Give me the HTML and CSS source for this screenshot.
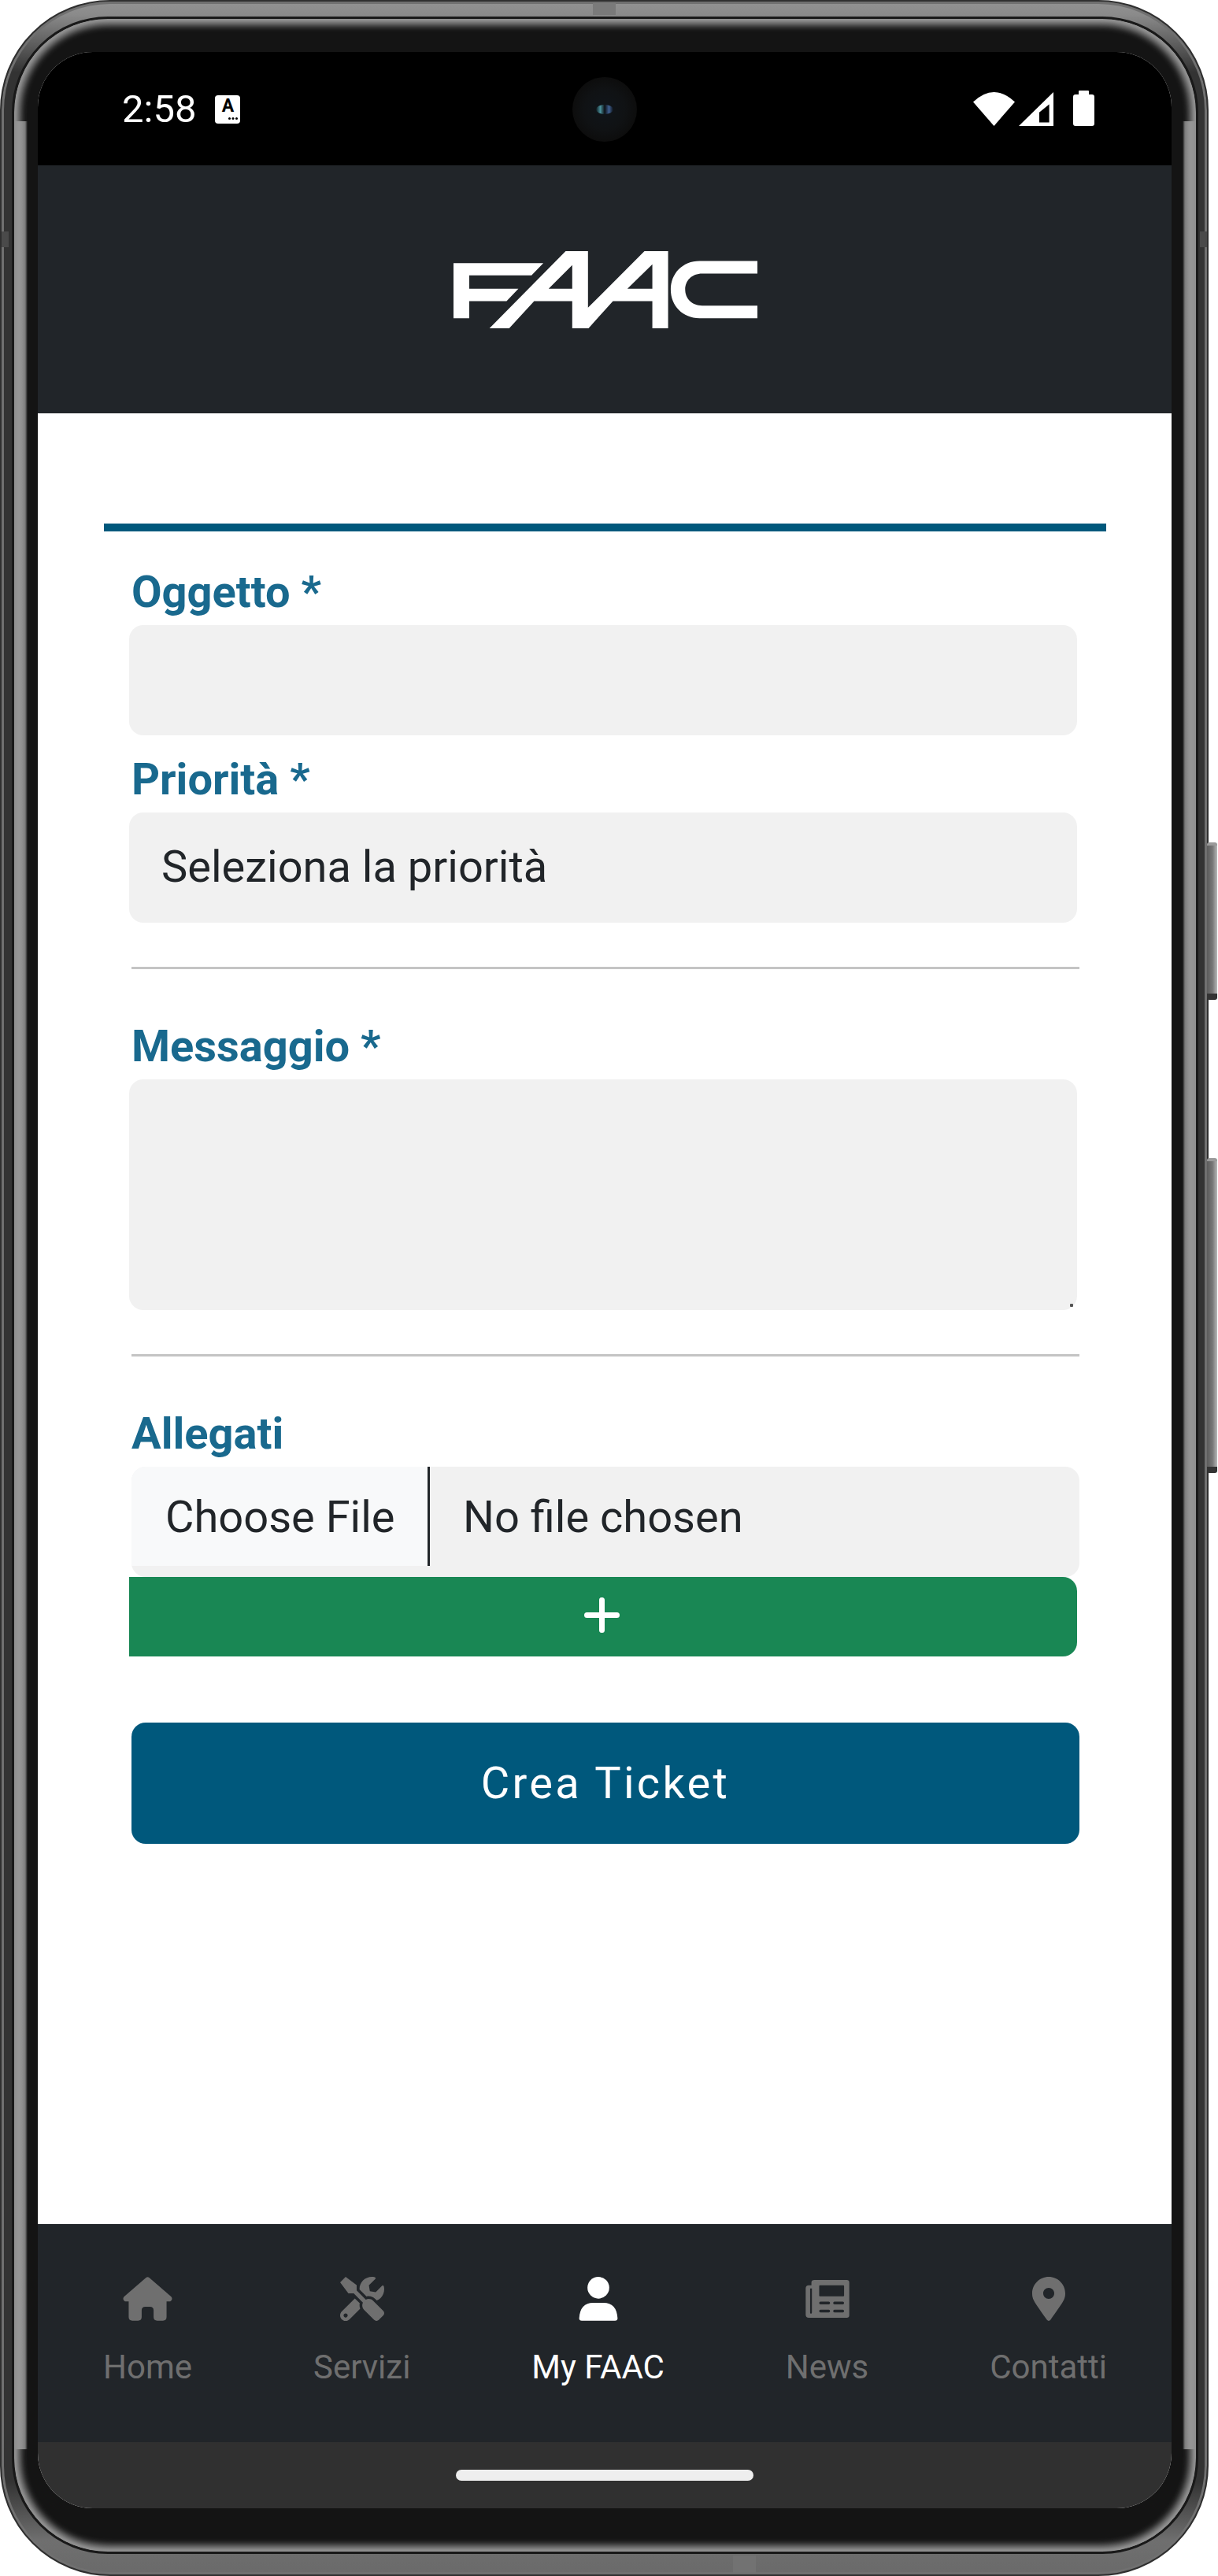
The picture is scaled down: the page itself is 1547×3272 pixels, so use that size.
FILE: index.html
```html
<!DOCTYPE html>
<html lang="it">
<head>
<meta charset="utf-8">
<title>FAAC - Crea Ticket</title>
<link rel="stylesheet" href="styles.css">
</head>
<body>
<div class="phone">
  <span class="side-btn side-btn-top"></span>
  <span class="side-btn side-btn-bottom"></span>
  <span class="seam seam-top"></span>
  <span class="seam seam-bottom"></span>
  <span class="antenna antenna-left"></span>
  <span class="antenna antenna-right"></span>
  <div class="bezel">
    <div class="screen">
      <div class="camera"><span class="lens"></span></div>
      <div class="status">
        <div class="status-left">
          <span class="time">2:58</span>
          <span class="a-badge">A<i class="a-dots"></i></span>
        </div>
        <div class="status-right">
          <svg class="ic-wifi" viewBox="0 0 53 43"><path d="M26.5 43L0 12.5Q26.5-12.5 53 12.5Z"/></svg>
          <svg class="ic-signal" viewBox="0 0 44 43"><path fill-rule="evenodd" d="M44 0V43H0ZM38.6 15.5L26 25.8V38.6H38.6Z"/></svg>
          <svg class="ic-battery" viewBox="0 0 27 45"><path d="M8 0H19Q20 0 20 1V5H24Q27 5 27 8V42Q27 45 24 45H3Q0 45 0 42V8Q0 5 3 5H7V1Q7 0 8 0Z"/></svg>
        </div>
      </div>
      <header class="header">
        <svg class="logo" viewBox="108 115 1157 293" role="img" aria-label="FAAC">
          <path d="M108 160H450L405 207H168V258H355L310 305H168V370H108Z"/>
          <path fill-rule="evenodd" d="M245 408L535 115H620V330L835 115H925V408H865V305H715L622 408H560V305H415L320 408ZM560 168V258H470ZM865 165V258H770Z"/>
          <path d="M1265 152H1045C980 152 935 200 935 261C935 322 980 370 1045 370H1265V322H1055C1015 322 990 295 990 261C990 227 1015 200 1055 200H1265Z"/>
        </svg>
      </header>
      <main class="main">
        <form class="form">
          <label class="label">Oggetto *</label>
          <input class="field field-input" type="text">
          <label class="label label-next">Priorità *</label>
          <div class="field field-select">Seleziona la priorità</div>
          <hr class="divider">
          <label class="label">Messaggio *</label>
          <div class="textarea-wrap">
            <textarea class="field field-area"></textarea>
            <span class="resize-grip"></span>
          </div>
          <hr class="divider">
          <label class="label">Allegati</label>
          <div class="file">
            <span class="file-btn">Choose File</span>
            <span class="file-name">No file chosen</span>
          </div>
          <button class="add-btn" type="button" aria-label="Aggiungi">
            <svg class="ic-plus" viewBox="0 0 45 45"><path d="M22.5 3.5V41.5M3.5 22.5H41.5"/></svg>
          </button>
          <button class="submit-btn" type="button">Crea Ticket</button>
        </form>
      </main>
      <nav class="nav">
        <a class="nav-item">
          <svg class="nav-icon ic-home" viewBox="50 35 190 170"><path d="M139 38Q145 33 151 38L236 112Q244 122 232 130H218V190Q218 204 204 204H182Q168 204 168 190V164Q168 150 154 150H136Q122 150 122 164V190Q122 204 108 204H86Q72 204 72 190V130H58Q46 122 54 112Z"/></svg>
          <span class="nav-label">Home</span>
        </a>
        <a class="nav-item">
          <svg class="nav-icon ic-tools" viewBox="0 0 512 512"><path d="M501.1 395.7L384 278.6c-23.1-23.1-57.6-27.6-85.4-13.9L192 158.1V96L64 0 0 64l96 128h62.1l106.6 106.6c-13.6 27.8-9.2 62.3 13.9 85.4l117.1 117.1c14.6 14.6 38.2 14.6 52.7 0l52.7-52.7c14.5-14.6 14.5-38.2 0-52.7zM331.7 225c28.3 0 54.9 11 74.9 31l19.4 19.4c15.8-6.9 30.8-16.5 43.8-29.5 37.1-37.1 49.7-89.3 37.9-136.7-2.2-9-13.5-12.1-20.1-5.5l-74.4 74.4-67.9-11.3L334 98.9l74.4-74.4c6.6-6.6 3.4-17.9-5.7-20.2-47.4-11.7-99.6.9-136.6 37.9-28.5 28.5-41.9 66.1-41.2 103.6l82.1 82.1c8.1-1.9 16.5-2.9 24.7-2.9zm-103.9 82l-56.7-56.7L18.7 402.8c-25 25-25 65.5 0 90.5s65.5 25 90.5 0l123.6-123.6c-7.6-19.9-9.9-41.6-5-62.7zM64 472c-13.2 0-24-10.8-24-24 0-13.3 10.7-24 24-24s24 10.7 24 24c0 13.2-10.7 24-24 24z"/></svg>
          <span class="nav-label">Servizi</span>
        </a>
        <a class="nav-item nav-item-active">
          <svg class="nav-icon ic-person" viewBox="45 35 150 170"><circle cx="120" cy="77" r="42"/><path d="M46 194Q50 135 100 135H140Q190 135 194 194Q194 204 184 204H56Q46 204 46 194Z"/></svg>
          <span class="nav-label">My FAAC</span>
        </a>
        <a class="nav-item">
          <svg class="nav-icon ic-news" viewBox="908 35 168 170"><path fill-rule="evenodd" d="M942 47H1066Q1076 47 1076 57V183Q1076 193 1066 193H920Q908 193 908 181V80Q908 68 920 68H930V57Q930 47 942 47ZM925 80V172Q925 177 928 177Q932 177 932 172V80ZM963 68Q960 68 960 71V107Q960 110 963 110H1053Q1056 110 1056 107V71Q1056 68 1053 68ZM965 131Q960 131 960 136Q960 141 965 141H997Q1002 141 1002 136Q1002 131 997 131ZM1019 131Q1014 131 1014 136Q1014 141 1019 141H1051Q1056 141 1056 136Q1056 131 1051 131ZM965 162Q960 162 960 167Q960 172 965 172H997Q1002 172 1002 167Q1002 162 997 162ZM1019 162Q1014 162 1014 167Q1014 172 1019 172H1051Q1056 172 1056 167Q1056 162 1051 162Z"/></svg>
          <span class="nav-label">News</span>
        </a>
        <a class="nav-item">
          <svg class="nav-icon ic-pin" viewBox="0 0 384 512"><path fill-rule="evenodd" d="M172.268 501.67C26.97 291.031 0 268.413 0 192 0 85.961 85.961 0 192 0s192 85.961 192 192c0 76.413-26.97 99.031-172.268 309.67-9.535 13.774-29.93 13.773-39.464 0zM192 256c35.346 0 64-28.654 64-64s-28.654-64-64-64-64 28.654-64 64 28.654 64 64 64z"/></svg>
          <span class="nav-label">Contatti</span>
        </a>
      </nav>
      <div class="gesture"><span class="gesture-pill"></span></div>
    </div>
  </div>
</div>
</body>
</html>
```
FILE: styles.css
```css
* { box-sizing: border-box; }
html, body { margin: 0; padding: 0; background: #fff; }
body { width: 1547px; height: 3272px; overflow: hidden; font-family: Roboto, "Liberation Sans", sans-serif; }

/* device frame */
.phone {
  position: relative;
  width: 1535px;
  height: 3272px;
  padding: 19px 11px 26px 13px;
  border-radius: 140px;
  border: 2px solid #2f2f2f;
  box-shadow: inset 0 0 0 3px #707070;
  background: linear-gradient(#929292 0, #8a8a8a 17px, #333 90px, #333 3150px, #6f6f6f 3225px, #6a6a6a 100%);
}
.bezel {
  height: 100%;
  padding: 42px 31px 55px 30px;
  border: 3px solid #191919;
  border-radius: 122px;
  background-color: #141414;
  background-image: linear-gradient(to right, #c4c4c4 0, #7a7a7a 14px, #141414 17px, #141414 calc(100% - 17px), #7a7a7a calc(100% - 14px), #c4c4c4 100%);
  background-size: 100% calc(100% - 260px);
  background-position: center;
  background-repeat: no-repeat;
  box-shadow: inset 0 0 9px 8px #8e8e8e, inset 0 0 3px 2px #c4c4c4;
}
.side-btn {
  position: absolute;
  left: 1531px;
  width: 13px;
  border-radius: 3px;
  background: linear-gradient(to right, #5c5c5c, #777 55%, #b8b8b8);
  border-top: 4px solid #9a9a9a;
  border-bottom: 8px solid #333;
}
.side-btn-top { top: 1068px; height: 200px; }
.side-btn-bottom { top: 1469px; height: 400px; }
.seam { position: absolute; background: #7a7a7a; width: 29px; }
.seam-top { left: 751px; top: 2px; height: 15px; }
.seam-bottom { left: 929px; top: 3244px; height: 22px; background: #727272; }
.antenna { position: absolute; width: 9px; height: 20px; top: 292px; background: #4a4a4a; }
.antenna-left { left: 0; }
.antenna-right { left: 1522px; }

/* screen */
.screen {
  position: relative;
  width: 1440px;
  height: 3120px;
  display: flex;
  flex-direction: column;
  border-radius: 70px;
  overflow: hidden;
  background: #fff;
}
.camera {
  position: absolute;
  left: 679px;
  top: 32px;
  width: 82px;
  height: 82px;
  border-radius: 50%;
  background: radial-gradient(circle, #10151a 0, #101214 45%, #0d0d0d 70%);
  display: flex;
  align-items: center;
  justify-content: center;
}
.lens {
  width: 22px;
  height: 12px;
  border-radius: 50%;
  background: linear-gradient(to right, #0d1a20, #4a8f9a 25%, #0b0f14 50%, #3f5f90 75%, #0d1218);
}

/* status bar */
.status {
  flex: none;
  height: 144px;
  padding: 2px 98px 0 107px;
  background: #000;
  color: #fff;
  display: flex;
  align-items: center;
  justify-content: space-between;
}
.status-left { display: flex; align-items: center; gap: 24px; }
.time { font-size: 49px; line-height: 56px; }
.a-badge {
  position: relative;
  width: 32px;
  height: 36px;
  border-radius: 4px;
  background: #fff;
  color: #000;
  font-size: 23px;
  font-weight: 700;
  line-height: 28px;
  text-align: center;
}
.a-dots {
  position: absolute;
  left: 17px;
  top: 28px;
  width: 3px;
  height: 3px;
  border-radius: 50%;
  background: #000;
  box-shadow: 4.5px 0 #000, 9px 0 #000;
}
.status-right { display: flex; align-items: flex-end; height: 45px; margin-top: -4px; }
.status-right svg { display: block; fill: #fff; }
.ic-wifi { width: 53px; height: 43px; }
.ic-signal { width: 44px; height: 43px; margin-left: 5px; }
.ic-battery { width: 27px; height: 45px; margin-left: 25px; }

/* header */
.header {
  flex: none;
  height: 315px;
  padding-left: 2px;
  background: #212529;
  display: flex;
  align-items: center;
  justify-content: center;
}
.logo { display: block; width: 386px; height: 98px; fill: #fff; }

/* form */
.main { flex: 1; padding: 140px 83px 0 84px; background: #fff; }
.form { border-top: 10px solid #00587c; padding: 35px 34px 0 35px; }
.label {
  display: block;
  color: #19698e;
  font-size: 56px;
  font-weight: 700;
  line-height: 84px;
}
.label-next { margin-top: 14px; }
.field {
  display: block;
  width: 1204px;
  height: 140px;
  margin: 0 0 0 -3px;
  padding: 0 41px;
  border: 0;
  border-radius: 18px;
  background: #f1f1f1;
  color: #212529;
  font-family: inherit;
  font-size: 56px;
  outline: none;
}
.field-select { line-height: 138px; height: 140px; margin-bottom: 1px; }
.textarea-wrap { position: relative; }
.field-area { height: 293px; resize: none; }
.resize-grip {
  position: absolute;
  left: 1192px;
  top: 285px;
  width: 4px;
  height: 4px;
  border-radius: 1px;
  background: #555;
}
.divider {
  width: 1204px;
  height: 3px;
  margin: 56px 0;
  border: 0;
  background: #c4c4c4;
}
.file {
  display: flex;
  align-items: flex-start;
  width: 1204px;
  height: 140px;
  border-radius: 18px;
  background: #f1f1f1;
  color: #212529;
  font-size: 56px;
  overflow: hidden;
}
.file-btn {
  flex: none;
  width: 379px;
  height: 126px;
  padding-left: 43px;
  background: #f8f9fa;
  border-right: 3px solid #212529;
  line-height: 128px;
}
.file-name { padding-left: 42px; line-height: 128px; }
.add-btn {
  display: flex;
  align-items: center;
  justify-content: center;
  width: 1204px;
  height: 101px;
  margin: 0 0 0 -3px;
  padding: 0 4px 5px 0;
  border: 0;
  border-radius: 0 18px 18px 0;
  background: #198754;
}
.ic-plus {
  width: 45px;
  height: 45px;
  fill: none;
  stroke: #fff;
  stroke-width: 7px;
  stroke-linecap: round;
}
.submit-btn {
  display: block;
  width: 1204px;
  height: 154px;
  margin-top: 84px;
  border: 0;
  border-radius: 18px;
  background: #00587c;
  color: #fff;
  font-family: inherit;
  font-size: 56px;
  letter-spacing: 3.3px;
}

/* bottom navigation */
.nav {
  flex: none;
  height: 277px;
  padding: 67px 82px 0 83px;
  background: #212529;
  display: flex;
  align-items: flex-start;
  justify-content: space-between;
}
.nav-item {
  display: flex;
  flex-direction: column;
  align-items: center;
  color: #6f6f6f;
  fill: #6f6f6f;
}
.nav-item-active { color: #fff; fill: #fff; }
.nav-icon { display: block; height: 56px; }
.ic-home { width: 63px; }
.ic-tools { width: 56px; }
.ic-person { width: 50px; }
.ic-news { width: 56px; }
.ic-pin { width: 42px; }
.nav-label { margin-top: 31px; font-size: 42px; line-height: 56px; }

.gesture {
  flex: none;
  height: 84px;
  padding-top: 35px;
  background: #303030;
  display: flex;
  justify-content: center;
}
.gesture-pill {
  width: 378px;
  height: 14px;
  border-radius: 7px;
  background: #eee;
}
```
